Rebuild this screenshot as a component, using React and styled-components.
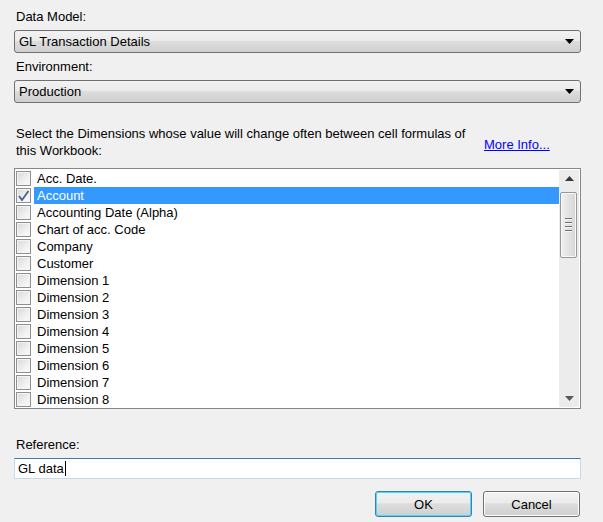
import { createGlobalStyle, styled } from "styled-components";

const DIMENSIONS = [
  "Acc. Date.",
  "Account",
  "Accounting Date (Alpha)",
  "Chart of acc. Code",
  "Company",
  "Customer",
  "Dimension 1",
  "Dimension 2",
  "Dimension 3",
  "Dimension 4",
  "Dimension 5",
  "Dimension 6",
  "Dimension 7",
  "Dimension 8",
];

const SELECTED = "Account";

function ComboBox({ value }) {
  return (
    <Combo>
      <span>{value}</span>
      <ComboArrow viewBox="0 0 9 5">
        <path d="M0 0h9L4.5 5z" fill="#000" />
      </ComboArrow>
    </Combo>
  );
}

function CheckBox({ checked }) {
  return (
    <Check>
      {checked && (
        <svg width="13" height="13" viewBox="0 0 13 13">
          <path
            d="M2 7 L5 11 L11.5 2"
            fill="none"
            stroke="#4a5f97"
            strokeWidth="1.8"
          />
        </svg>
      )}
    </Check>
  );
}

function ScrollBar() {
  return (
    <Scroll>
      <ArrowBtn>
        <svg width="9" height="5" viewBox="0 0 9 5">
          <path d="M4.5 0L9 5H0z" fill="#3a3a3a" />
        </svg>
      </ArrowBtn>
      <Track>
        <Thumb>
          <Grip />
          <Grip />
          <Grip />
          <Grip />
        </Thumb>
      </Track>
      <ArrowBtn>
        <svg width="9" height="5" viewBox="0 0 9 5">
          <path d="M0 0h9L4.5 5z" fill="#5a5a5a" />
        </svg>
      </ArrowBtn>
    </Scroll>
  );
}

export default function App() {
  return (
    <>
      <GlobalStyle />
      <Dialog>
        <Label>Data Model:</Label>
        <ComboBox value="GL Transaction Details" />
        <Label $top={6}>Environment:</Label>
        <ComboBox value="Production" />

        <DescRow>
          <Desc>
            Select the Dimensions whose value will change often between cell
            formulas of this Workbook:
          </Desc>
          <Link>More Info...</Link>
        </DescRow>

        <List>
          <Rows>
            {DIMENSIONS.map((name) => (
              <Row key={name}>
                <CheckBox checked={name === SELECTED} />
                <RowText $selected={name === SELECTED}>{name}</RowText>
              </Row>
            ))}
          </Rows>
          <ScrollBar />
        </List>

        <Label $top={28}>Reference:</Label>
        <TextBox>
          GL data
          <Caret />
        </TextBox>

        <Buttons>
          <Button $default>OK</Button>
          <Button>Cancel</Button>
        </Buttons>
      </Dialog>
    </>
  );
}

const GlobalStyle = createGlobalStyle`
  html, body {
    margin: 0;
    padding: 0;
    background: #f0f0f0;
  }
  body {
    font-family: "Liberation Sans", Arial, sans-serif;
    font-size: 13px;
    color: #000;
  }
`;

const Dialog = styled.div`
  width: 603px;
  height: 522px;
  padding: 9px 22px 0 14px;
  box-sizing: border-box;
  display: flex;
  flex-direction: column;
`;

const Label = styled.div`
  line-height: 15px;
  padding-left: 2px;
  margin-top: ${({ $top }) => $top || 0}px;
  margin-bottom: 6px;
`;

const Combo = styled.div`
  height: 23px;
  box-sizing: border-box;
  border: 1px solid #707070;
  border-radius: 3px;
  background: linear-gradient(
    to bottom,
    #f2f2f2 0%,
    #ebebeb 45%,
    #dddddd 50%,
    #cfcfcf 100%
  );
  display: flex;
  align-items: center;
  justify-content: space-between;
  padding: 0 6px 0 4px;
`;

const ComboArrow = styled.svg`
  width: 9px;
  height: 5px;
`;

const DescRow = styled.div`
  display: flex;
  align-items: flex-start;
  margin-top: 22px;
  height: 43px;
`;

const Desc = styled.div`
  width: 463px;
  line-height: 17px;
  padding-left: 2px;
`;

const Link = styled.a`
  margin-top: 11px;
  margin-left: 5px;
  color: #0000ff;
  text-decoration: underline;
  cursor: pointer;
  line-height: 17px;
  white-space: nowrap;
`;

const List = styled.div`
  height: 241px;
  box-sizing: border-box;
  border: 1px solid #828790;
  background: #fff;
  display: flex;
`;

const Rows = styled.div`
  flex: 1;
  overflow: hidden;
  padding-top: 1px;
`;

const Row = styled.div`
  height: 17px;
  display: flex;
  align-items: center;
  padding-left: 1px;
`;

const Check = styled.div`
  width: 15px;
  height: 15px;
  box-sizing: border-box;
  border: 1px solid #8e8f8f;
  background: linear-gradient(135deg, #d8d8d8 0%, #f0f0f0 60%, #fbfbfb 100%);
  box-shadow: inset 0 0 0 1px #f4f4f4;
  display: flex;
  align-items: center;
  justify-content: center;
  flex-shrink: 0;
`;

const RowText = styled.div`
  flex: 1;
  height: 17px;
  line-height: 17px;
  margin-left: 3px;
  padding-left: 3px;
  background: ${({ $selected }) => ($selected ? "#3399ff" : "transparent")};
  color: ${({ $selected }) => ($selected ? "#fff" : "#000")};
  white-space: nowrap;
`;

const Scroll = styled.div`
  width: 20px;
  margin: 1px 1px 1px 0;
  background: #ececec;
  display: flex;
  flex-direction: column;
`;

const ArrowBtn = styled.div`
  height: 17px;
  display: flex;
  align-items: center;
  justify-content: center;
`;

const Track = styled.div`
  flex: 1;
  padding-top: 5px;
`;

const Thumb = styled.div`
  height: 66px;
  margin: 0 2px 0 1px;
  box-sizing: border-box;
  border: 1px solid #979797;
  border-radius: 2px;
  background: linear-gradient(to right, #f0f0f0 0%, #e2e2e2 50%, #d6d6d6 100%);
  box-shadow: inset 0 0 0 1px #f8f8f8;
  display: flex;
  flex-direction: column;
  align-items: center;
  justify-content: center;
  gap: 2px;
`;

const Grip = styled.div`
  width: 7px;
  height: 1px;
  background: #6f6f6f;
  border-bottom: 1px solid #f6f6f6;
`;

const TextBox = styled.div`
  height: 21px;
  box-sizing: border-box;
  border: 1px solid #c5daed;
  border-top-color: #3d7bad;
  background: #fff;
  display: flex;
  align-items: center;
  padding-left: 3px;
`;

const Caret = styled.span`
  width: 1px;
  height: 15px;
  background: #000;
  margin-left: 1px;
`;

const Buttons = styled.div`
  display: flex;
  justify-content: flex-end;
  gap: 11px;
  margin-top: 12px;
  margin-right: 1px;
`;

const Button = styled.div`
  width: 97px;
  height: 26px;
  box-sizing: border-box;
  border: 1px solid ${({ $default }) => ($default ? "#3c7fb1" : "#707070")};
  border-radius: 3px;
  background: linear-gradient(
    to bottom,
    #f2f2f2 0%,
    #ebebeb 45%,
    #dddddd 50%,
    #cfcfcf 100%
  );
  box-shadow: inset 0 0 0 1px
    ${({ $default }) => ($default ? "#48d8fb" : "#fcfcfc")};
  display: flex;
  align-items: center;
  justify-content: center;
`;
